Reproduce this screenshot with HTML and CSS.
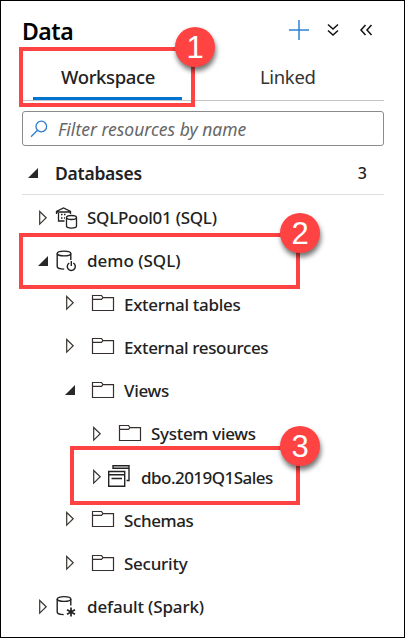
FILE: index.html
```html
<!DOCTYPE html>
<html lang="en">
<head>
<meta charset="utf-8">
<title>Data</title>
<link rel="stylesheet" href="styles.css">
</head>
<body>
<svg width="0" height="0" class="defs">
  <symbol id="closed" viewBox="0 0 10 16"><path d="M1.700 1.500v12.600L8.200 7.800z" fill="none" stroke="#38342f" stroke-width="1.200"/></symbol>
  <symbol id="open" viewBox="0 0 10 10"><path d="M10 0v10H0z" fill="#292827"/></symbol>
  <symbol id="folder" viewBox="0 0 24 20"><path d="M1.500 17.500v-15h9l1.500 2.200h10.500v12.800zM1.500 6.400h9L12 4.700" fill="none" stroke="#35302d" stroke-width="1.200"/></symbol>
</svg>
<main class="panel">
  <header class="head">
    <h1>Data</h1>
    <svg class="plus" width="22" height="22" viewBox="0 0 22 22"><path d="M11 1v20M1 11h20" stroke="#2b83d8" stroke-width="1.500"/></svg>
    <svg class="chev" width="14" height="14" viewBox="0 0 14 14"><path d="M2 1.500l5 4.500 5-4.500M2 7.500l5 4.500 5-4.500" fill="none" stroke="#111" stroke-width="1.500"/></svg>
    <svg class="chev2" width="14" height="14" viewBox="0 0 14 14"><path d="M6.500 2L2 7l4.500 5M12.500 2L8 7l4.500 5" fill="none" stroke="#111" stroke-width="1.500"/></svg>
  </header>
  <nav class="tabs">
    <div class="tab active"><span>Workspace</span></div>
    <div class="tab linked"><span>Linked</span></div>
  </nav>
  <div class="search">
    <svg width="18" height="18" viewBox="0 0 18 18"><circle cx="11.300" cy="6.500" r="5.300" fill="none" stroke="#2b7cd3" stroke-width="1.300"/><path d="M7.500 10.300L1 16.800" stroke="#2b7cd3" stroke-width="1.300"/></svg>
    <span>Filter resources by name</span>
  </div>
  <div class="section">
    <svg class="tri" width="10" height="10"><use href="#open"/></svg>
    <h2>Databases</h2><span class="count">3</span>
  </div>
  <div class="tree">
    <div class="row">
      <svg class="arrow" width="10" height="16"><use href="#closed"/></svg>
      <svg class="icon" width="24" height="24" viewBox="0 0 24 24"><g fill="none" stroke="#222" stroke-width="1.300"><path d="M1.500 8V5.500L8.500 2l7 3.500V8M1.500 6h14M3.500 7v8h6"/><path d="M6 8.500h6M6 12h4" stroke-dasharray="1.500 1.500"/><ellipse cx="16.500" cy="11.500" rx="5" ry="2" fill="#fff"/><path d="M11.500 11.500v8.500c0 2.700 10 2.700 10 0v-8.500"/></g></svg>
      <span class="t1">SQLPool01 (SQL)</span>
    </div>
    <div class="row">
      <svg class="arrow" width="10" height="10"><use href="#open"/></svg>
      <svg class="icon" width="24" height="24" viewBox="0 0 24 24"><g fill="none" stroke="#222" stroke-width="1.400"><ellipse cx="9" cy="4.500" rx="6.800" ry="2.400"/><path d="M2.200 4.500v13c0 1.500 2.500 2.500 7 2.600M15.800 4.500v6.500M14.300 14a4 4 0 1 0 4 0M16.300 12v5"/></g></svg>
      <span class="t2">demo (SQL)</span>
    </div>
    <div class="row child"><svg class="arrow" width="10" height="16"><use href="#closed"/></svg><svg class="icon" width="24" height="20"><use href="#folder"/></svg><span class="t3">External tables</span></div>
    <div class="row child"><svg class="arrow" width="10" height="16"><use href="#closed"/></svg><svg class="icon" width="24" height="20"><use href="#folder"/></svg><span class="t4">External resources</span></div>
    <div class="row child"><svg class="arrow" width="10" height="10"><use href="#open"/></svg><svg class="icon" width="24" height="20"><use href="#folder"/></svg><span class="t5">Views</span></div>
    <div class="row leaf"><svg class="arrow" width="10" height="16"><use href="#closed"/></svg><svg class="icon" width="24" height="20"><use href="#folder"/></svg><span class="t6">System views</span></div>
    <div class="row leaf view">
      <svg class="arrow" width="10" height="16"><use href="#closed"/></svg>
      <svg class="icon" width="24" height="24" viewBox="0 0 24 24"><g fill="none" stroke="#222" stroke-width="1.400"><path d="M1.700 7.500h16v14.800h-16zM1.700 10.700h16M4.500 14.500h10.500M6 5V1.700h16v14.800h-2.500M6 4.200h16" /></g></svg>
      <span class="t7">dbo.2019Q1Sales</span>
    </div>
    <div class="row child"><svg class="arrow" width="10" height="16"><use href="#closed"/></svg><svg class="icon" width="24" height="20"><use href="#folder"/></svg><span class="t8">Schemas</span></div>
    <div class="row child"><svg class="arrow" width="10" height="16"><use href="#closed"/></svg><svg class="icon" width="24" height="20"><use href="#folder"/></svg><span class="t9">Security</span></div>
    <div class="row">
      <svg class="arrow" width="10" height="16"><use href="#closed"/></svg>
      <svg class="icon" width="24" height="24" viewBox="0 0 24 24"><g fill="none" stroke="#222" stroke-width="1.400"><ellipse cx="9" cy="4" rx="6.800" ry="2.400"/><path d="M2.200 4v13c0 1.500 2 2.500 6.500 2.600M15.800 4v6.500"/><path d="M16 12.500v9M12 14.700l8 4.600M20 14.700l-8 4.600" stroke-width="1.700"/></g></svg>
      <span class="t10">default (Spark)</span>
    </div>
  </div>
  <div class="mark m1"><b>1</b></div>
  <div class="mark m2"><b>2</b></div>
  <div class="mark m3"><b>3</b></div>
</main>
</body>
</html>
```
FILE: styles.css
```css
* { box-sizing: border-box; }
body { margin: 0; background: #fff; }
.defs { position: absolute; }
.panel {
  position: relative;
  width: 405px;
  height: 638px;
  border: 1px solid #000;
  padding: 0 20px 0 21px;
  overflow: hidden;
  background: #fff;
  color: #222;
  font-family: "Noto Sans", "Open Sans", sans-serif;
  font-size: 17px;
  font-weight: 500;
  white-space: nowrap;
}
.head { display: flex; align-items: center; height: 58px; }
h1 { margin: 2px 0 0; width: 266px; font-size: 23px; font-weight: 600; line-height: 30px; letter-spacing: -.5px; color: #000; }
.plus { margin-right: 16px; }
.chev { margin-right: 19px; }
.tabs { display: flex; height: 42px; border-bottom: 1px solid #c4c4c4; padding-left: 11px; font-size: 18.500px; }
.tab { width: 149px; height: 41px; line-height: 36px; padding-left: 28px; letter-spacing: -.35px; }
.active { border-bottom: 3px solid #0072d0; }
.linked { padding-left: 78px; font-weight: 400; color: #333; }
.search {
  display: flex;
  align-items: center;
  width: 362px;
  height: 35px;
  margin-top: 10px;
  padding-left: 7px;
  gap: 10px;
  border: 1px solid #8b8b8b;
  border-bottom-width: 1.500px;
  border-radius: 3px;
  font-size: 17.500px;
  font-weight: 400;
  font-style: italic;
  color: #666;
}
.section { display: flex; align-items: center; height: 49px; padding: 6px 17px 0 6px; border-bottom: 1px solid #ddd; }
h2 { margin: 0 0 0 17px; font-size: 17.500px; font-weight: 600; letter-spacing: -.25px; }
.count { margin-left: auto; font-size: 16px; }
.tree { padding-top: 1px; }
.row { display: flex; align-items: center; height: 43.250px; padding-left: 16px; }
.arrow { width: 10px; }
.icon { margin: 0 8px 0 7px; }
.child { padding-left: 43px; }
.child .icon, .leaf .icon { margin: 0 9px 0 16px; position: relative; top: -1px; }
.child .arrow { position: relative; top: -1px; }
.leaf { padding-left: 70px; }
.leaf.view .icon { margin: 0 10px 0 5px; }
.t1 { letter-spacing: -.27px; }
.t3, .t5, .t6 { letter-spacing: -.3px; }
.t4 { letter-spacing: -.36px; }
.t7 { letter-spacing: -.53px; }
.t8 { letter-spacing: -.4px; }
.t9 { letter-spacing: -.25px; }
.t10 { letter-spacing: -.15px; }
.mark { position: absolute; border: 4px solid #ff4343; }
.mark b {
  position: absolute;
  top: -24px;
  right: -24px;
  width: 40px;
  height: 40px;
  border-radius: 50%;
  background: #ff4343;
  box-shadow: 1px 4px 5px rgba(0, 0, 0, .55);
  color: #fff;
  font: 400 31px/41px "Liberation Sans", sans-serif;
  text-align: center;
}
.m1 { left: 18px; top: 46px; width: 176px; height: 60px; }
.m2 { left: 18px; top: 232px; width: 281px; height: 56px; }
.m3 { left: 69px; top: 445px; width: 230px; height: 59px; }
```
